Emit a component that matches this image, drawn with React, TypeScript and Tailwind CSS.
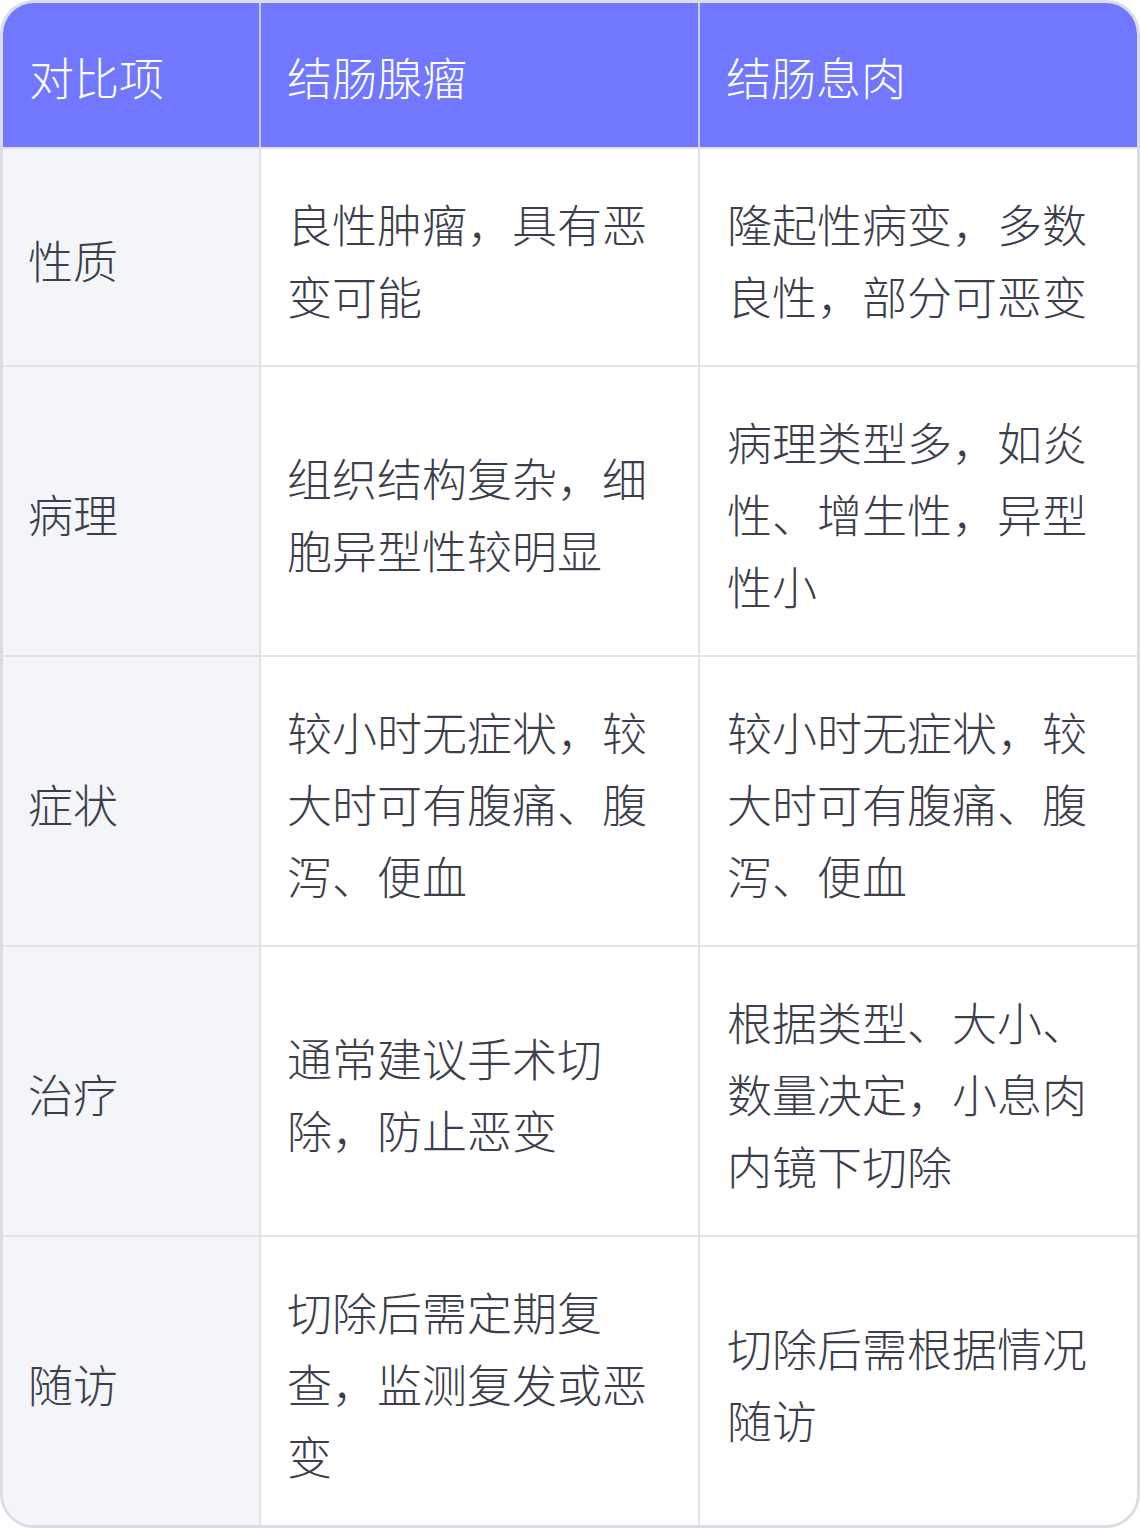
import React from 'react';

const rows: [string, string, string][] = [
    ['性质', '良性肿瘤，具有恶变可能', '隆起性病变，多数良性，部分可恶变'],
    ['病理', '组织结构复杂，细胞异型性较明显', '病理类型多，如炎性、增生性，异型性小'],
    ['症状', '较小时无症状，较大时可有腹痛、腹泻、便血', '较小时无症状，较大时可有腹痛、腹泻、便血'],
    ['治疗', '通常建议手术切除，防止恶变', '根据类型、大小、数量决定，小息肉内镜下切除'],
    ['随访', '切除后需定期复查，监测复发或恶变', '切除后需根据情况随访'],
];

export default function App() {
    return (
        <div
            className="w-[1140px] bg-white"
            style={{ fontFamily: '"Noto Sans CJK SC", "Noto Sans", sans-serif' }}
        >
            <div className="overflow-hidden rounded-[34px] border-[3px] border-[#dcdde1]">
                <table className="w-full table-fixed border-collapse text-[45px] leading-[72px] font-extralight">
                    <colgroup>
                        <col className="w-[257px]" />
                        <col className="w-[439px]" />
                        <col />
                    </colgroup>
                    <thead>
                        <tr className="bg-[#7177ff] text-white">
                            <th className="border-r-2 border-b-2 border-r-[#c9cbf5] border-b-[#e2e3e8] pl-[26px] pr-7 pt-[38px] pb-[34px] text-left font-extralight">对比项</th>
                            <th className="border-r-2 border-b-2 border-r-[#c9cbf5] border-b-[#e2e3e8] pl-[26px] pr-7 pt-[38px] pb-[34px] text-left font-extralight">结肠腺瘤</th>
                            <th className="border-b-2 border-b-[#e2e3e8] pl-[26px] pr-7 pt-[38px] pb-[34px] text-left font-extralight">结肠息肉</th>
                        </tr>
                    </thead>
                    <tbody className="text-[#3c3f4b]">
                        {rows.map(([label, a, b], i) => {
                            const last = i === rows.length - 1;
                            const bottom = last ? '' : 'border-b-2 border-b-[#e2e3e8]';
                            return (
                                <tr key={label}>
                                    <td className={`bg-[#f4f5f9] border-r-2 border-r-[#e2e3e8] pl-[25px] pr-7 pt-[39px] pb-[33px] align-middle ${bottom}`}>{label}</td>
                                    <td className={`border-r-2 border-r-[#e2e3e8] pl-[26px] pr-7 pt-[39px] pb-[33px] align-middle ${bottom}`}>{a}</td>
                                    <td className={`pl-[27px] pr-7 pt-[39px] pb-[33px] align-middle ${bottom}`}>{b}</td>
                                </tr>
                            );
                        })}
                    </tbody>
                </table>
            </div>
        </div>
    );
}
